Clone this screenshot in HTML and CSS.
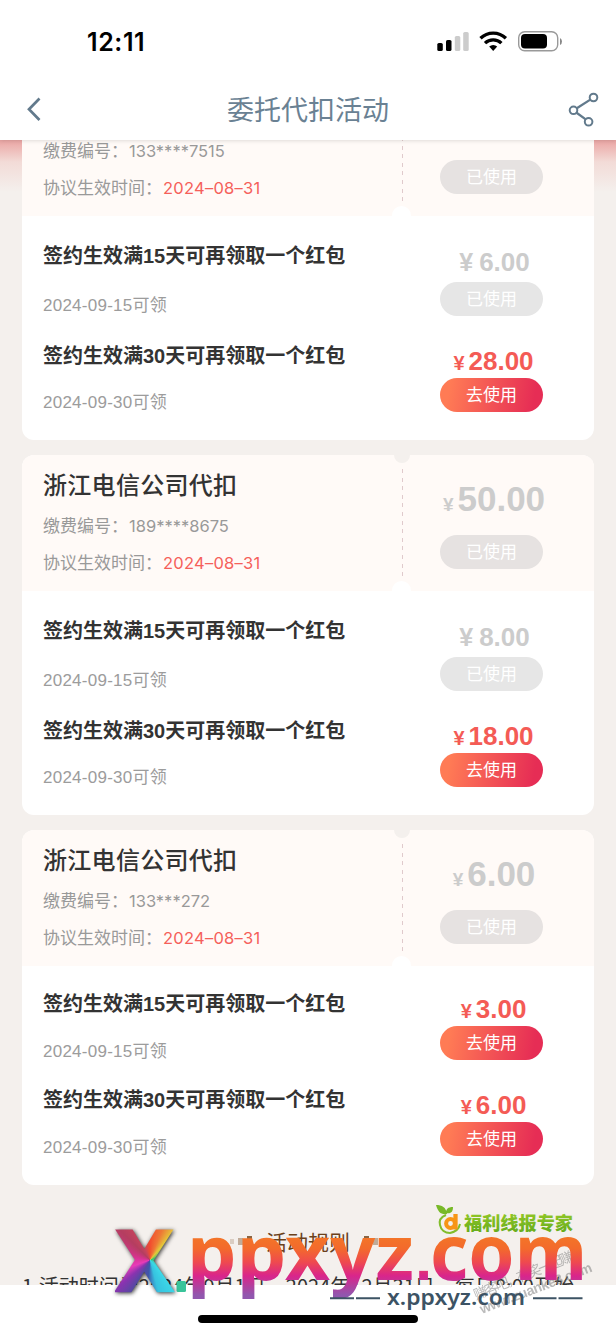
FILE: index.html
```html
<!DOCTYPE html>
<html lang="zh-CN">
<head>
<meta charset="utf-8">
<title>委托代扣活动</title>
<link rel="stylesheet" href="styles.css">
</head>
<body>
<div class="screen">
  <header class="topbar">
    <div class="status">
      <span class="clock">12:11</span>
      <svg class="status-icons" width="126" height="24" viewBox="0 0 126 24">
        <rect x="0.300" y="13" width="5.500" height="8" rx="1.600"/>
        <rect x="9" y="10" width="5.500" height="11" rx="1.600"/>
        <rect x="17.800" y="6" width="5.500" height="15" rx="1.600" fill="#ccc"/>
        <rect x="26.200" y="2" width="5.500" height="19" rx="1.600" fill="#ccc"/>
        <g fill="none" stroke="#000" stroke-width="3.300">
          <path d="M43.500 8.300a18.200 18.200 0 0 1 25.400 0"/>
          <path d="M48 13.100a11.800 11.800 0 0 1 16.400 0"/>
        </g>
        <path d="M52.200 16.600a6 6 0 0 1 8 0L56.200 21z"/>
        <rect x="81.700" y="1.800" width="39" height="19" rx="6" fill="none" stroke="#999" stroke-width="1.400"/>
        <rect x="84" y="4" width="26" height="14.500" rx="4"/>
        <path d="M123 8v7q2-1 2-3.500t-2-3.500z" fill="#888"/>
      </svg>
    </div>
    <nav class="nav">
      <svg class="back" width="16" height="26" viewBox="0 0 16 26"><path d="M13.500 2.500 3 13.300 13.500 24" fill="none" stroke="#627a8c" stroke-width="2.700"/></svg>
      <h1 class="nav-title">委托代扣活动</h1>
      <svg class="share" width="32" height="36" viewBox="0 0 32 36" fill="none" stroke="#627a8c" stroke-width="2"><circle cx="5.500" cy="19.300" r="3.800"/><circle cx="25.500" cy="6.500" r="3.800"/><circle cx="20.600" cy="30.800" r="3.800"/><path d="M8.800 17.300 22.300 8.600M8.600 21.700 17.700 28.400" stroke-width="2.300"/></svg>
    </nav>
  </header>

  <main class="content">
    <section class="card card-first">
      <div class="head head-short">
        <div class="info">
          <p class="meta">缴费编号：<span class="num">133****7515</span></p>
          <p class="meta">协议生效时间：<span class="num date-red">2024–08–31</span></p>
        </div>
        <div class="side"><span class="btn btn-used">已使用</span></div>
        <i class="dash"></i><i class="notch-bottom"></i>
      </div>
      <div class="row row-a">
        <div class="left"><h3>签约生效满15天可再领取一个红包</h3><p>2024-09-15可领</p></div>
        <div class="side"><div class="price used"><b class="yen">¥</b>6.00</div><span class="btn btn-used">已使用</span></div>
      </div>
      <div class="row row-b">
        <div class="left"><h3>签约生效满30天可再领取一个红包</h3><p>2024-09-30可领</p></div>
        <div class="side"><div class="price"><b class="yen">¥</b>28.00</div><span class="btn">去使用</span></div>
      </div>
    </section>

    <section class="card">
      <div class="head">
        <div class="info">
          <h2>浙江电信公司代扣</h2>
          <p class="meta">缴费编号：<span class="num">189****8675</span></p>
          <p class="meta">协议生效时间：<span class="num date-red">2024–08–31</span></p>
        </div>
        <div class="side"><div class="price big"><b class="yen">¥</b>50.00</div><span class="btn btn-used">已使用</span></div>
        <i class="notch-top"></i><i class="dash"></i><i class="notch-bottom"></i>
      </div>
      <div class="row row-a">
        <div class="left"><h3>签约生效满15天可再领取一个红包</h3><p>2024-09-15可领</p></div>
        <div class="side"><div class="price used"><b class="yen">¥</b>8.00</div><span class="btn btn-used">已使用</span></div>
      </div>
      <div class="row row-b">
        <div class="left"><h3>签约生效满30天可再领取一个红包</h3><p>2024-09-30可领</p></div>
        <div class="side"><div class="price"><b class="yen">¥</b>18.00</div><span class="btn">去使用</span></div>
      </div>
    </section>

    <section class="card compact">
      <div class="head">
        <div class="info">
          <h2>浙江电信公司代扣</h2>
          <p class="meta">缴费编号：<span class="num">133***272</span></p>
          <p class="meta">协议生效时间：<span class="num date-red">2024–08–31</span></p>
        </div>
        <div class="side"><div class="price big"><b class="yen">¥</b>6.00</div><span class="btn btn-used">已使用</span></div>
        <i class="notch-top"></i><i class="dash"></i><i class="notch-bottom"></i>
      </div>
      <div class="row row-a">
        <div class="left"><h3>签约生效满15天可再领取一个红包</h3><p>2024-09-15可领</p></div>
        <div class="side"><div class="price"><b class="yen">¥</b>3.00</div><span class="btn">去使用</span></div>
      </div>
      <div class="row row-b">
        <div class="left"><h3>签约生效满30天可再领取一个红包</h3><p>2024-09-30可领</p></div>
        <div class="side"><div class="price"><b class="yen">¥</b>6.00</div><span class="btn">去使用</span></div>
      </div>
    </section>

    <section class="rules">
      <div class="rules-title"><i class="sq s1"></i><i class="sq s2"></i><i class="sq s3"></i><span>活动规则</span><i class="sq s3"></i><i class="sq s2"></i><i class="sq s1"></i></div>
      <p class="rule">1.活动时间为2024年9月1日—2024年12月31日，每日8:00开始</p>
    </section>
  </main>

  <footer class="bottom"><div class="home"></div></footer>

  <div class="marks">
    <svg class="mark-svg" width="616" height="154" viewBox="0 0 616 154">
      <defs>
        <linearGradient id="warm" gradientUnits="userSpaceOnUse" x1="0" y1="57" x2="0" y2="115">
          <stop offset="0" stop-color="#f37528"/><stop offset=".2" stop-color="#f36a2c"/><stop offset=".43" stop-color="#ef4a4e"/><stop offset=".67" stop-color="#d9258b"/><stop offset="1" stop-color="#9157ae"/>
        </linearGradient>
        <linearGradient id="leaf" x1="0" y1="0" x2="0" y2="1"><stop offset="0" stop-color="#9bcd28"/><stop offset="1" stop-color="#62a91c"/></linearGradient>
      </defs>
      <g class="diag">
        <text transform="translate(476 120) rotate(-22)" font-size="14" textLength="118">赚客吧，有奖一起赚！</text>
        <text transform="translate(482 134) rotate(-21)" font-size="14" font-weight="700" textLength="119">www.zuanke8.com</text>
      </g>
      <rect x="176.500" y="101" width="9.500" height="11" rx="1.500" fill="#39c49a"/>
      <text class="big-mark" y="100"><tspan x="187" textLength="227" lengthAdjust="spacingAndGlyphs">ppxyz</tspan><tspan class="dot" x="415">.</tspan><tspan x="430" textLength="157" lengthAdjust="spacingAndGlyphs">com</tspan></text>
      <text class="small-mark" x="387" y="125" textLength="138" lengthAdjust="spacingAndGlyphs">x.ppxyz.com</text>
      <path d="M330 118.300h24M356 118.300h24M533 118.300h23.500M558.500 118.300h24" stroke="#3c5364" stroke-width="2"/>
      <text class="green-mark" x="464" y="49.500" textLength="109" lengthAdjust="spacingAndGlyphs">福利线报专家</text>
      <path d="M436 25c6 0 10 2 11 9-6 1-9-2-11-9zM446 33c0-4 2-6 7-6 0 5-2 7-7 6z" fill="#78b928"/>
      <path d="M446 35c-5 2-7 6-6 10 1 5 5 8 10 8 5-1 9-4 10-9" fill="none" stroke="#82bd2b" stroke-width="2"/>
      <circle cx="450.500" cy="43.500" r="4.400" fill="none" stroke="#f79516" stroke-width="4"/>
      <path d="M455.500 34v15.500" stroke="#f79516" stroke-width="4.300"/>
    </svg>
    <div class="x-wrap"><span class="x-mark">X</span></div>
  </div>
</div>
</body>
</html>
```

FILE: styles.css
```css
* { box-sizing: border-box; margin: 0; padding: 0; }
body { background: #fff; font-family: "Liberation Sans", "Noto Sans CJK SC", sans-serif; }
.screen { position: relative; width: 616px; height: 1334px; overflow: hidden; display: flex; flex-direction: column; }

.topbar { height: 140px; background: #fff; flex: none; box-shadow: 0 1px 4px rgba(60, 60, 60, .16); position: relative; z-index: 2; }
.status { height: 79px; padding: 30px 53px 0 87px; display: flex; justify-content: space-between; align-items: flex-start; }
.clock { font: 600 25px/25px Inter, sans-serif; letter-spacing: .6px; }
.nav { height: 60px; display: flex; justify-content: space-between; align-items: center; padding: 0 16px 0 26px; }
.nav-title { font: 400 27px/40px "Noto Sans CJK SC", sans-serif; color: #6a8193; margin-left: 6px; }

.content { height: 1145px; flex: none; overflow: hidden; padding: 0 22px;
  background:
    linear-gradient(rgba(222, 60, 60, .42), rgba(235, 110, 100, .16) 22px, rgba(244, 240, 237, 0) 52px),
    linear-gradient(#f4f0ed, #f4f0ed); }
.card { background: #fff; border-radius: 12px; overflow: hidden; margin-bottom: 15px; }
.card-first { border-radius: 0 0 12px 12px; }
.head { position: relative; height: 135.5px; display: flex; background: #fffaf7; }
.head-short { height: 75.5px; }
.info { width: 380px; padding: 0 0 10.5px 21px; display: flex; flex-direction: column; justify-content: flex-end; }
.info h2 { font: 500 24px/36px "Noto Sans CJK SC", sans-serif; color: #333; letter-spacing: .3px; margin-bottom: 4px; }
.meta { font: 400 17px/37px "Noto Sans CJK SC", sans-serif; height: 37px; color: #999; white-space: nowrap; }
.num { font: 400 16.5px/17px Inter, sans-serif; color: #999; margin-left: 1px; letter-spacing: 0; }
.date-red { color: #f5605a; letter-spacing: .25px; }
.side { width: 103px; margin-left: 38px; display: flex; flex-direction: column; align-items: center; }
.head .side { padding-bottom: 22px; justify-content: flex-end; }
.btn { width: 103px; height: 34px; flex: none; border-radius: 17px; background: linear-gradient(100deg, #ff7b55 10%, #e62d55 90%); color: #fff; text-align: center; font: 400 17px/32px "Noto Sans CJK SC", sans-serif; }
.btn-used { background: #e6e6e6; }
.head .btn-used { background: #e6e2e1; }
.price { height: 32px; font-size: 26px; line-height: 32px; font-weight: 700; color: #f45b55; white-space: nowrap; padding-left: 4px; }
.yen { font-size: 20px; margin-right: 4px; }
.price.used { color: #ccc; padding-left: 6px; }
.used .yen { font-size: 25px; margin-right: 6px; }
.price.big { color: #ccc; font-size: 35px; height: 40px; line-height: 40px; padding-left: 5px; margin-bottom: 16px; }
.big .yen { font-size: 19px; }
.dash { position: absolute; left: 380px; top: 14px; width: 1px; bottom: 13px; background: repeating-linear-gradient(#e0cacc 0 4px, transparent 4px 8.600px); }
.head-short .dash { top: -3px; }
.notch-top { position: absolute; left: 372px; top: -9px; width: 16px; height: 17px; border-radius: 8px; background: #f4f0ed; }
.notch-bottom { position: absolute; left: 370px; bottom: -10px; width: 19px; height: 20px; border-radius: 10px; background: #fff; }

.row { display: flex; }
.left { width: 380px; padding-left: 21px; }
.left h3 { font-size: 20px; font-weight: 700; line-height: 30px; height: 30px; color: #333; white-space: nowrap; }
.left p { font-weight: 400; font-size: 17px; line-height: 24px; height: 24px; margin-top: 23px; color: #9c9c9c; letter-spacing: .25px; }
.row-a { height: 125px; padding-top: 25.5px; }
.row-a .side { padding-top: 5px; }
.row-a .btn { margin-top: 3.5px; }
.row-b { height: 99.5px; }
.row-b .left p { margin-top: 20px; }
.row-b .side { padding-top: 4px; }
.row-b .btn { margin-top: 1px; }
.compact .row-a { height: 119px; padding-top: 23.5px; }
.compact .row-a .side { padding-top: 4px; }
.compact .row-b { height: 100.5px; }
.compact .left p, .compact .row-b .left p { margin-top: 21px; }
.compact .row-b .side { padding-top: 4.5px; }
.compact .row .btn { margin-top: .5px; }

.rules { height: 85px; }
.rules-title { height: 40px; margin-top: 36px; display: flex; justify-content: center; align-items: center; gap: 4px; font: 400 21px/40px "Noto Sans CJK SC", sans-serif; color: #6b411b; }
.rules-title span { margin: 0 10px; }
.sq { background: #8b6543; height: 10px; width: 5px; }
.s1 { opacity: .25; width: 4px; height: 5px; }
.s2 { opacity: .5; height: 7px; }
.rule { font: 400 20px/32px "Noto Sans CJK SC", sans-serif; color: #333; white-space: nowrap; margin-top: 9px; letter-spacing: .03px; }
.bottom { flex: 1; background: #fff; padding-top: 30px; }
.home { width: 220px; height: 8px; border-radius: 4px; background: #000; margin: 0 auto; }

.marks { position: absolute; left: 0; top: 1180px; width: 616px; height: 154px; z-index: 3; }
.mark-svg { display: block; }
.big-mark { font: 700 77px "Noto Sans", sans-serif; fill: url(#warm); }
.dot { font: 700 62px "Liberation Sans", sans-serif; }
.small-mark { font: 600 22px "Noto Sans", sans-serif; fill: #3c5364; }
.green-mark { font: 900 18px "Noto Sans CJK SC", sans-serif; fill: url(#leaf); }
.diag { fill: #777; opacity: .5; font-family: "Liberation Sans", "Noto Sans CJK SC", sans-serif; }
.x-wrap { position: absolute; left: 115px; top: 46px; filter: drop-shadow(1px 1px 2px rgba(0, 0, 0, .8)); }
.x-mark { display: block; width: 60px; height: 84px; margin-top: -10px; padding-left: 1px; font: 700 85px/84px "Noto Sans", sans-serif; color: transparent; -webkit-text-stroke: 2.5px transparent; -webkit-background-clip: text; background-clip: text;
  background-image: conic-gradient(from 0deg at 35px 44px, #f24c2e 0deg, #ee7836 22deg, #e5c83a 40deg, #36c26a 70deg, #3cd7e8 140deg, #36c2df 165deg, #3d57ab 185deg, #5549a2 210deg, #8a33b0 230deg, #e83cb8 250deg, #d83291 280deg, #b43e60 315deg, #c8445c 335deg, #f24c2e 360deg); }
```
